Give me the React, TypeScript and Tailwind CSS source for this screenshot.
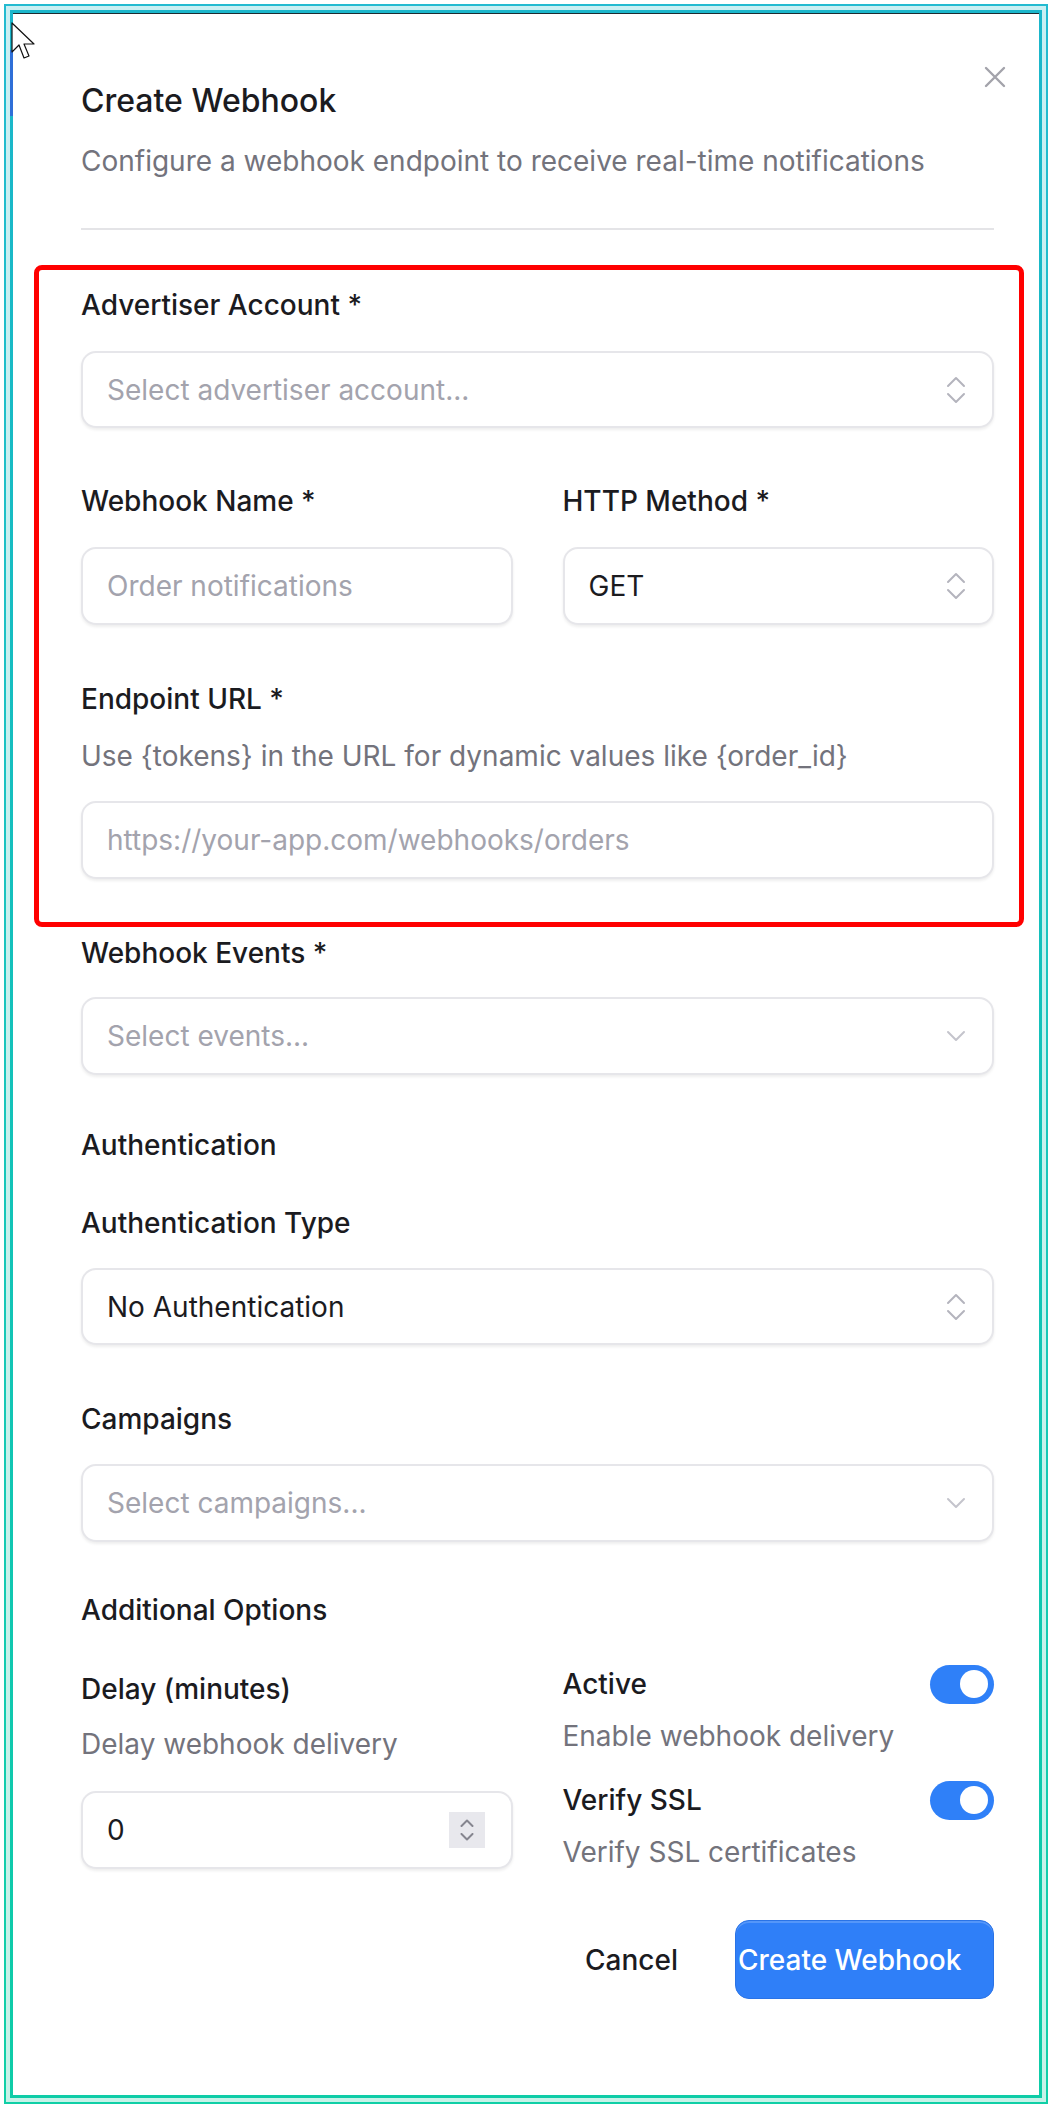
import React from "react";

// ── Small drawings ─────────────────────────────────────────────────────────────
function UpDown() {
  return (
    <svg width="20" height="30" viewBox="0 0 20 30" fill="none" stroke="#b4b4bd" strokeWidth="2" strokeLinecap="round" strokeLinejoin="round">
      <path d="M2 11 10 3 18 11" />
      <path d="M2 19 10 27 18 19" />
    </svg>
  );
}

function Down() {
  return (
    <svg width="20" height="12" viewBox="0 0 20 12" fill="none" stroke="#c4c4cc" strokeWidth="2" strokeLinecap="round" strokeLinejoin="round">
      <path d="M2 2 10 10 18 2" />
    </svg>
  );
}

function Cursor() {
  return (
    <svg width="28" height="40" viewBox="0 0 28 40" className="absolute left-[-2px] top-[8px]">
      <path d="M1 1 L1 30 L8 23 L13 36 L18 34 L13 22 L23 22 Z" fill="#fff" stroke="#111" strokeWidth="1.2" strokeLinejoin="round" />
    </svg>
  );
}

// ── Field pieces ───────────────────────────────────────────────────────────────
const font = { fontFamily: "Inter, 'Noto Sans', sans-serif" };

function Label({ children, className = "" }: { children: React.ReactNode; className?: string }) {
  return <div className={`text-[28px] leading-[40px] font-medium text-[#1b1b1f] ${className}`}>{children}</div>;
}

function Hint({ children, className = "" }: { children: React.ReactNode; className?: string }) {
  return <div className={`text-[28px] leading-[40px] text-[#73737c] ${className}`}>{children}</div>;
}

function Box({
  children,
  className = "",
  h = "h-[78px]",
}: {
  children: React.ReactNode;
  className?: string;
  h?: string;
}) {
  return (
    <div
      className={`${h} flex items-center justify-between rounded-[15px] border-2 border-[#e6e6ea] bg-white pl-[24px] pr-[26px] text-[28px] shadow-[0_2px_3px_rgba(0,0,0,0.07)] ${className}`}
    >
      {children}
    </div>
  );
}

function Placeholder({ children }: { children: React.ReactNode }) {
  return <span className="text-[#a3a3ad]">{children}</span>;
}

function Toggle() {
  return (
    <div className="flex h-[39px] w-[64px] items-center justify-end rounded-full bg-[#2f80f8] pr-[6px]">
      <div className="h-[28px] w-[28px] rounded-full bg-white" />
    </div>
  );
}

// ═══════════════════════════════════════════════════════════════════════════════
export default function App() {
  return (
    <div className="h-[2108px] bg-white p-[4px] pb-[4px]" style={font}>
      <div className="h-full bg-gradient-to-b from-[#22bad0] to-[#10cfa6] p-[2px]">
        <div className="h-full bg-gradient-to-b from-[#c9eff3] to-[#c6f2e8] p-[4px]">
          <div className="h-full bg-gradient-to-b from-[#1bb6cb] to-[#0ecca7] p-[3px]">
            <div className="relative h-full border-t border-[#1d2b30] bg-white">
              <div className="absolute left-[-3px] top-[36px] h-[66px] w-[3px] bg-[#2f6fd8]" />
              <Cursor />

              {/* ── Close ───────────────────────────────────────────── */}
              <svg
                width="22"
                height="22"
                viewBox="0 0 22 22"
                className="absolute left-[971px] top-[52px]"
                fill="none"
                stroke="#a3a3ab"
                strokeWidth="2.4"
                strokeLinecap="round"
              >
                <path d="M2 2 20 20M20 2 2 20" />
              </svg>

              {/* ── Red highlight ───────────────────────────────────── */}
              <div className="pointer-events-none absolute left-[21px] top-[251px] h-[662px] w-[990px] rounded-[8px] border-[5px] border-[#ff0000]" />

              <div className="ml-[68px] w-[913px] pt-[67px]">
                {/* ── Header ──────────────────────────────────────── */}
                <div className="text-[32px] leading-[40px] font-medium text-[#1b1b1f]">Create Webhook</div>
                <Hint className="mt-[20px]">Configure a webhook endpoint to receive real-time notifications</Hint>
                <div className="mt-[47px] h-[2px] bg-[#e4e4e7]" />

                {/* ── Account ─────────────────────────────────────── */}
                <Label className="mt-[55px]">Advertiser Account *</Label>
                <Box className="mt-[26px]" h="h-[77px]">
                  <Placeholder>Select advertiser account...</Placeholder>
                  <UpDown />
                </Box>

                {/* ── Name / Method ───────────────────────────────── */}
                <div className="mt-[53px] grid grid-cols-2 gap-[50px]">
                  <div>
                    <Label>Webhook Name *</Label>
                    <Box className="mt-[26px]">
                      <Placeholder>Order notifications</Placeholder>
                    </Box>
                  </div>
                  <div>
                    <Label>HTTP Method *</Label>
                    <Box className="mt-[26px]">
                      <span className="text-[#1b1b1f]">GET</span>
                      <UpDown />
                    </Box>
                  </div>
                </div>

                {/* ── Endpoint ────────────────────────────────────── */}
                <Label className="mt-[54px]">Endpoint URL *</Label>
                <Hint className="mt-[17px]">Use {"{tokens}"} in the URL for dynamic values like {"{order_id}"}</Hint>
                <Box className="mt-[25px]">
                  <Placeholder>https://your-app.com/webhooks/orders</Placeholder>
                </Box>

                {/* ── Events ──────────────────────────────────────── */}
                <Label className="mt-[54px]">Webhook Events *</Label>
                <Box className="mt-[24px]">
                  <Placeholder>Select events...</Placeholder>
                  <Down />
                </Box>

                {/* ── Auth ────────────────────────────────────────── */}
                <Label className="mt-[50px]">Authentication</Label>
                <Label className="mt-[38px]">Authentication Type</Label>
                <Box className="mt-[25px]" h="h-[77px]">
                  <span className="text-[#1b1b1f]">No Authentication</span>
                  <UpDown />
                </Box>

                {/* ── Campaigns ───────────────────────────────────── */}
                <Label className="mt-[54px]">Campaigns</Label>
                <Box className="mt-[25px]">
                  <Placeholder>Select campaigns...</Placeholder>
                  <Down />
                </Box>

                {/* ── Additional options ──────────────────────────── */}
                <Label className="mt-[48px]">Additional Options</Label>
                <div className="mt-[34px] grid grid-cols-2 gap-[50px]">
                  <div className="pt-[5px]">
                    <Label>Delay (minutes)</Label>
                    <Hint className="mt-[15px]">Delay webhook delivery</Hint>
                    <Box className="mt-[27px] pr-[23px]">
                      <span className="text-[#1b1b1f]">0</span>
                      <div className="flex h-[36px] w-[36px] flex-col items-center justify-center gap-[6px] bg-[#e8e8ed]">
                        <svg width="14" height="8" viewBox="0 0 14 8" fill="none" stroke="#85858f" strokeWidth="2" strokeLinecap="round" strokeLinejoin="round">
                          <path d="M1.5 7 7 1.5 12.5 7" />
                        </svg>
                        <svg width="14" height="8" viewBox="0 0 14 8" fill="none" stroke="#85858f" strokeWidth="2" strokeLinecap="round" strokeLinejoin="round">
                          <path d="M1.5 1 7 6.5 12.5 1" />
                        </svg>
                      </div>
                    </Box>
                  </div>
                  <div>
                    <div className="flex h-[40px] items-center justify-between">
                      <Label>Active</Label>
                      <Toggle />
                    </div>
                    <Hint className="mt-[12px]">Enable webhook delivery</Hint>
                    <div className="mt-[24px] flex h-[40px] items-center justify-between">
                      <Label>Verify SSL</Label>
                      <Toggle />
                    </div>
                    <Hint className="mt-[12px]">Verify SSL certificates</Hint>
                  </div>
                </div>

                {/* ── Footer ──────────────────────────────────────── */}
                <div className="mt-[48px] flex items-center justify-end gap-[29px]">
                  <button className="h-[79px] px-[28px] text-[28px] font-medium text-[#1b1b1f]">Cancel</button>
                  <button className="h-[79px] w-[259px] overflow-hidden whitespace-nowrap rounded-[14px] border border-[#2a73e6] bg-[#2f7ff8] pl-[2px] text-left text-[28px] font-medium text-white shadow-[inset_0_2px_0_rgba(255,255,255,0.18)]">
                    Create Webhook
                  </button>
                </div>
              </div>
            </div>
          </div>
        </div>
      </div>
    </div>
  );
}
